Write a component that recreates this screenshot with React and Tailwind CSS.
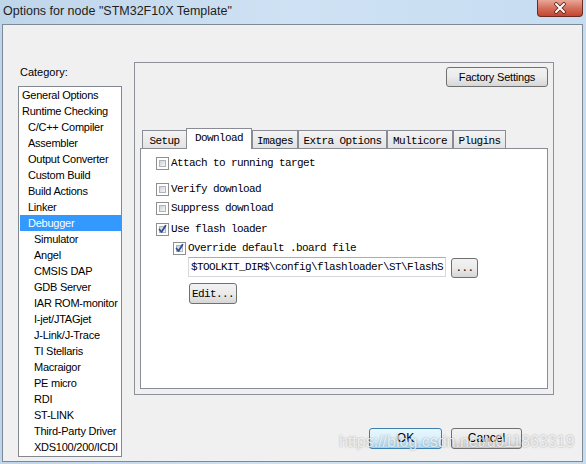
const categories = [
  { label: 'General Options', level: 0 },
  { label: 'Runtime Checking', level: 0 },
  { label: 'C/C++ Compiler', level: 1 },
  { label: 'Assembler', level: 1 },
  { label: 'Output Converter', level: 1 },
  { label: 'Custom Build', level: 1 },
  { label: 'Build Actions', level: 1 },
  { label: 'Linker', level: 1 },
  { label: 'Debugger', level: 1, selected: true },
  { label: 'Simulator', level: 2 },
  { label: 'Angel', level: 2 },
  { label: 'CMSIS DAP', level: 2 },
  { label: 'GDB Server', level: 2 },
  { label: 'IAR ROM-monitor', level: 2 },
  { label: 'I-jet/JTAGjet', level: 2 },
  { label: 'J-Link/J-Trace', level: 2 },
  { label: 'TI Stellaris', level: 2 },
  { label: 'Macraigor', level: 2 },
  { label: 'PE micro', level: 2 },
  { label: 'RDI', level: 2 },
  { label: 'ST-LINK', level: 2 },
  { label: 'Third-Party Driver', level: 2 },
  { label: 'XDS100/200/ICDI', level: 2 },
];

const indent = ['pl-[2px]', 'pl-[8px]', 'pl-[14px]'];

const tabs = [
  { label: 'Setup', w: 'w-[45px]' },
  { label: 'Download', w: 'w-[66px]', active: true },
  { label: 'Images', w: 'w-[46px]' },
  { label: 'Extra Options', w: 'w-[89px]' },
  { label: 'Multicore', w: 'w-[66px]' },
  { label: 'Plugins', w: 'w-[53px]' },
];

const mono = "font-['Liberation_Mono',monospace] text-[11px] tracking-[-0.6px]";

const Check = ({ checked }) => (
  <span className="relative flex w-[13px] h-[13px] shrink-0 border border-[#8e8f8f] bg-white p-[2px]">
    <span className="flex-1 border border-[#b0b4ba] bg-gradient-to-br from-[#cfd2d7] to-[#f6f6f6]" />
    {checked && (
      <svg className="absolute left-0 top-0" width="11" height="11" viewBox="0 0 11 11">
        <path d="M2.5 5.5 L4.5 8 L8.5 1.8" fill="none" stroke="#2c4c9c" strokeWidth="1.8" strokeLinecap="round" strokeLinejoin="round" />
      </svg>
    )}
  </span>
);

const CheckRow = ({ label, checked, className }) => (
  <div className={`flex items-center h-[13px] ${className}`}>
    <Check checked={checked} />
    <span className={`ml-[2px] text-black leading-[13px] whitespace-nowrap ${mono}`}>{label}</span>
  </div>
);

const App = () => {
  return (
    <div className="relative w-[586px] h-[464px] overflow-hidden flex flex-col bg-gradient-to-r from-[#bfd5ea] via-[#cfe2f4] to-[#c6dcf1] font-['Liberation_Sans',Arial,sans-serif]">
      {/* title bar */}
      <div className="h-[24px] flex items-start justify-between shrink-0">
        <div className="pl-[3px] pt-[3px] text-[12.5px] leading-[16px] text-[#1e1e1e] whitespace-nowrap">
          Options for node "STM32F10X Template"
        </div>
        <div className="mr-[3px] w-[46px] h-[17px] rounded-b-[4px] border border-t-0 border-[#6b2a22] bg-gradient-to-b from-[#e9a797] via-[#d4705c] to-[#c4452f] flex items-center justify-center">
          <svg width="16" height="12" viewBox="0 0 16 12">
            <path d="M4 2 L12 10 M12 2 L4 10" stroke="#5a1f18" strokeWidth="3.6" strokeLinecap="round" />
            <path d="M4 2 L12 10 M12 2 L4 10" stroke="#ffffff" strokeWidth="2" strokeLinecap="round" />
          </svg>
        </div>
      </div>

      {/* client area */}
      <div className="ml-[2px] mr-[3px] h-[438px] border border-[#7d8996] bg-[#f0f0f0] flex">
        {/* category column */}
        <div className="pl-[15px] pt-[39px] flex flex-col">
          <div className="ml-[2px] h-[16px] leading-[16px] text-[11px] text-black">Category:</div>
          <div className="mt-[6px] w-[104px] h-[371px] border border-[#828790] bg-white overflow-hidden">
            {categories.map((c) => (
              <div
                key={c.label}
                className={`ml-[1px] w-[101px] h-[16px] leading-[16px] text-[11px] tracking-[-0.25px] whitespace-nowrap ${indent[c.level]} ${
                  c.selected ? 'bg-[#3399ff] text-white' : 'text-black'
                }`}
              >
                {c.label}
              </div>
            ))}
          </div>
        </div>

        {/* options column */}
        <div className="ml-[12px] pt-[37px] flex flex-col">
          <div className="w-[420px] h-[333px] border border-[#8e9198] px-[5px] pt-[4px] pb-[5px] flex flex-col">
            <div className="flex justify-end">
              <button className="w-[102px] h-[20px] rounded-[3px] border border-[#707070] bg-gradient-to-b from-[#f2f2f2] via-[#ebebeb] to-[#d6d6d6] text-[11px] tracking-[-0.2px] text-black leading-[18px]">
                Factory Settings
              </button>
            </div>

            {/* tabs */}
            <div className="mt-[41px] h-[20px] flex items-end pl-[2px]">
              {tabs.map((t) =>
                t.active ? (
                  <div
                    key={t.label}
                    className={`relative z-10 -mb-px h-[21px] ${t.w} -ml-px border border-b-0 border-[#898c95] bg-white text-center pt-[2px] leading-[14px] text-black ${mono}`}
                  >
                    {t.label}
                  </div>
                ) : (
                  <div
                    key={t.label}
                    className={`h-[18px] ${t.w} border border-b-0 border-[#898c95] bg-gradient-to-b from-[#f3f3f3] to-[#e3e3e3] text-center pt-[3px] leading-[14px] text-black ${mono}`}
                  >
                    {t.label}
                  </div>
                )
              )}
            </div>

            {/* tab page */}
            <div className="h-[241px] border border-[#898c95] bg-white pt-[8px] flex flex-col">
              <CheckRow label="Attach to running target" className="ml-[15px]" />
              <CheckRow label="Verify download" className="ml-[15px] mt-[13px]" />
              <CheckRow label="Suppress download" className="ml-[15px] mt-[6px]" />
              <CheckRow label="Use flash loader" checked className="ml-[15px] mt-[8px]" />
              <CheckRow label="Override default .board file" checked className="ml-[32px] mt-[6px]" />
              <div className="ml-[47px] mt-[2px] flex items-start">
                <div className={`w-[258px] h-[20px] border border-[#d5d8dd] border-t-[#abadb3] bg-white pl-[2px] leading-[18px] overflow-hidden whitespace-nowrap text-black ${mono}`}>
                  $TOOLKIT_DIR$\config\flashloader\ST\FlashS
                </div>
                <button className={`ml-[5px] mt-[1px] w-[27px] h-[20px] rounded-[3px] border border-[#707070] bg-gradient-to-b from-[#f2f2f2] via-[#ebebeb] to-[#d6d6d6] leading-[16px] text-black ${mono}`}>
                  ...
                </button>
              </div>
              <button className={`ml-[48px] mt-[5px] w-[48px] h-[21px] rounded-[3px] border border-[#707070] bg-gradient-to-b from-[#f2f2f2] via-[#ebebeb] to-[#d6d6d6] leading-[18px] text-black ${mono}`}>
                Edit...
              </button>
            </div>
          </div>

          {/* dialog buttons */}
          <div className="mt-[33px] mr-[32px] flex justify-end gap-[9px]">
            <button className="w-[73px] h-[21px] rounded-[3px] border border-[#3c7fb1] bg-gradient-to-b from-[#eaf6fd] via-[#d9f0fc] to-[#a7d9f5] text-[12px] leading-[19px] text-black">
              OK
            </button>
            <button className="w-[71px] h-[21px] rounded-[3px] border border-[#707070] bg-gradient-to-b from-[#f2f2f2] via-[#ebebeb] to-[#d0d0d0] text-[12px] leading-[19px] text-black">
              Cancel
            </button>
          </div>
        </div>
      </div>

      {/* watermark */}
      <div className="absolute left-[339px] top-[432px] text-[16px] leading-[20px] text-white/75 whitespace-nowrap [text-shadow:0_0_2px_rgba(0,0,0,0.35)]">
        https://blog.csdn.net/u011863319
      </div>
    </div>
  );
};

export default App;
